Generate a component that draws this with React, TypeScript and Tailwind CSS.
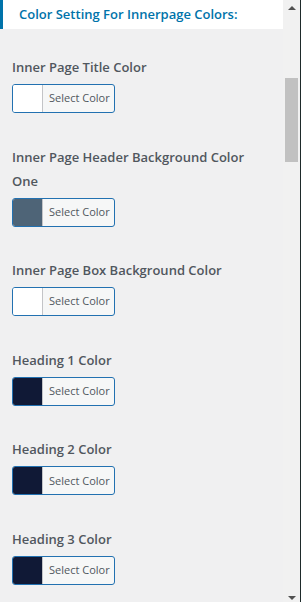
import React from 'react';

const fields = [
  { label: 'Inner Page Title Color', color: '#ffffff' },
  { label: 'Inner Page Header Background Color One', color: '#4e6477' },
  { label: 'Inner Page Box Background Color', color: '#ffffff' },
  { label: 'Heading 1 Color', color: '#101936' },
  { label: 'Heading 2 Color', color: '#101936' },
  { label: 'Heading 3 Color', color: '#101936' },
];

const ColorButton = ({ color }: { color: string }) => (
  <div className="flex h-[29px] w-[103px] overflow-hidden rounded-[3px] border border-[#2271b1] bg-[#f6f7f7]">
    <div className="w-[30px] border-r border-[#c3c4c7]" style={{ backgroundColor: color }} />
    <div className="flex flex-1 items-center pl-[6px] text-[11px] text-[#50575e]">Select Color</div>
  </div>
);

const App = () => {
  return (
    <div
      className="flex h-[602px] w-[301px] overflow-hidden bg-[#f0f0f1]"
      style={{ fontFamily: '"Open Sans", "Noto Sans", sans-serif' }}
    >
      <div className="flex w-[283px] flex-col">
        <div className="flex h-[29px] items-center border-l-[3px] border-[#0073aa] bg-white pl-[16px]">
          <h2 className="text-[13px] font-semibold text-[#0073aa]">Color Setting For Innerpage Colors:</h2>
        </div>
        <div className="flex flex-col gap-[31.6px] px-[12px] pt-[26px]">
          {fields.map((f) => (
            <div key={f.label} className="flex flex-col gap-[5px]">
              <p className="text-[13px] font-semibold leading-[24px] text-[#50575e]">{f.label}</p>
              <ColorButton color={f.color} />
            </div>
          ))}
        </div>
      </div>
      <div className="relative w-[17px] bg-[#f1f1f1]">
        <div className="absolute left-[5px] top-[6px] h-0 w-0 border-x-[4px] border-b-[4px] border-x-transparent border-b-[#505050]" />
        <div className="absolute left-[2px] top-[78px] h-[84px] w-[13px] bg-[#c1c1c1]" />
        <div className="absolute bottom-[2px] left-[5px] h-0 w-0 border-x-[4px] border-t-[4px] border-x-transparent border-t-[#505050]" />
      </div>
      <div className="w-[1px] bg-[#1e2a2a]" />
    </div>
  );
};

export default App;
